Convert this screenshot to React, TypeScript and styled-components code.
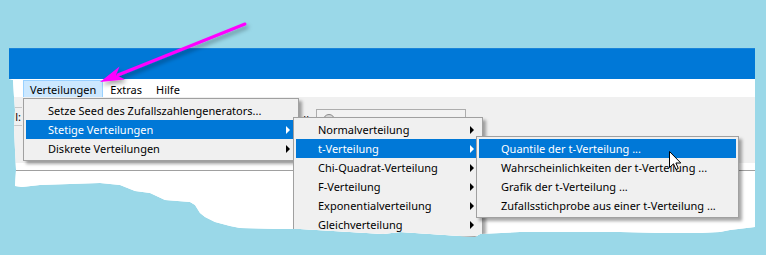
import React from "react";
import styled, { createGlobalStyle } from "styled-components";

const Global = createGlobalStyle`
  html, body { margin: 0; padding: 0; background: #9ad8e8; }
  body {
    width: 766px; height: 255px; overflow: hidden;
    font-family: "Noto Sans", "DejaVu Sans", sans-serif;
    font-size: 11px; color: #000;
  }
`;

const Stage = styled.div`
  position: relative;
  width: 766px;
  height: 255px;
  box-sizing: border-box;
  padding: 48px 0 0 9px;
`;

const tornEdge = `polygon(
  0px 0px, 746px 0px, 746px 179px,
  721px 182px, 711px 184px, 691px 185px, 651px 185px, 611px 184px,
  511px 184px, 471px 186px, 466px 189px, 421px 186px, 391px 184px,
  374px 186px, 291px 181px, 268px 181px, 231px 180px, 221px 178px,
  206px 174px, 196px 169px, 191px 165px, 186px 157px, 181px 154px,
  156px 152px, 141px 145px, 126px 143px, 111px 137px, 91px 135px,
  31px 137px, 13px 139px, 6px 138px,
  7px 122px, 6px 102px, 5px 82px, 6px 62px, 5px 49px, 4px 32px,
  0px 31px
)`;

const Window = styled.div`
  position: relative;
  width: 746px;
  height: 190px;
  display: flex;
  flex-direction: column;
  background: #fff;
  clip-path: ${tornEdge};
`;

const TitleBar = styled.div`
  height: 30px;
  flex: none;
  background: #0078d7;
  border-top: 1px solid #1a84d9;
`;

const MenuBar = styled.div`
  height: 18px;
  flex: none;
  background: #fff;
  display: flex;
  align-items: flex-end;
  padding-left: 14px;
`;

const MenuTitle = styled.div<{ $open?: boolean }>`
  height: 17px;
  box-sizing: border-box;
  padding: 0 6px;
  display: flex;
  align-items: center;
  border: 1px solid ${(p) => (p.$open ? "#99d1ff" : "transparent")};
  border-bottom: none;
  background: ${(p) => (p.$open ? "#cce8ff" : "transparent")};
  white-space: nowrap;
`;

const Toolbar = styled.div`
  height: 66px;
  flex: none;
  background: #f0f0f0;
  display: flex;
  align-items: flex-start;
`;

const DataLabel = styled.div`
  width: 13px;
  height: 19px;
  margin-top: 10px;
  box-sizing: border-box;
  border-top: 1px solid #c8c8c8;
  border-bottom: 1px solid #c8c8c8;
  display: flex;
  align-items: center;
  justify-content: flex-end;
  padding-right: 1px;
  white-space: nowrap;
`;

const ModelGroup = styled.div`
  margin-left: 250px;
  margin-top: 12px;
  display: flex;
  align-items: center;
  gap: 4px;
`;

const ModelLabel = styled.div`
  width: 40px;
  text-align: right;
  white-space: nowrap;
`;

const ModelBox = styled.div`
  width: 150px;
  height: 21px;
  box-sizing: border-box;
  border: 1px solid #adadad;
  background: #f2f2f2;
  display: flex;
  align-items: center;
  gap: 10px;
  padding: 3px 0 0 6px;
  color: #e00000;
  white-space: nowrap;
`;

const ModelIcon = styled.span`
  width: 10px;
  height: 10px;
  margin-top: -3px;
  border-radius: 50%;
  border: 1px solid #8a8a8a;
  background: #d8d8d8;
  flex: none;
`;

const ToolbarFoot = styled.div`
  height: 7px;
  flex: none;
  background: #fff;
  border-bottom: 1px solid #a0a0a0;
`;

const Content = styled.div`
  flex: 1;
  background: #fff;
`;

const MenuPanel = styled.div<{ $left: number; $top: number; $width: number }>`
  position: absolute;
  left: ${(p) => p.$left}px;
  top: ${(p) => p.$top}px;
  width: ${(p) => p.$width}px;
  box-sizing: border-box;
  background: #f0f0f0;
  border: 1px solid #a0a0a0;
  padding: 2px;
  box-shadow: 3px 3px 3px rgba(0, 0, 0, 0.35);
  display: flex;
  flex-direction: column;
`;

const MenuRow = styled.div<{ $hot?: boolean }>`
  height: 19px;
  flex: none;
  display: flex;
  align-items: center;
  padding: 0 6px 0 22px;
  white-space: nowrap;
  background: ${(p) => (p.$hot ? "#0078d7" : "transparent")};
  color: ${(p) => (p.$hot ? "#fff" : "#000")};
`;

const SubArrow = styled.span`
  margin-left: auto;
  width: 0;
  height: 0;
  border-left: 4px solid currentColor;
  border-top: 4px solid transparent;
  border-bottom: 4px solid transparent;
`;

const Overlay = styled.svg<{ $left: number; $top: number }>`
  position: absolute;
  left: ${(p) => p.$left}px;
  top: ${(p) => p.$top}px;
  overflow: visible;
  pointer-events: none;
`;

type Item = { label: string; sub?: boolean; hot?: boolean };

const menu1: Item[] = [
  { label: "Setze Seed des Zufallszahlengenerators..." },
  { label: "Stetige Verteilungen", sub: true, hot: true },
  { label: "Diskrete Verteilungen", sub: true },
];

const menu2: Item[] = [
  { label: "Normalverteilung", sub: true },
  { label: "t-Verteilung", sub: true, hot: true },
  { label: "Chi-Quadrat-Verteilung", sub: true },
  { label: "F-Verteilung", sub: true },
  { label: "Exponentialverteilung", sub: true },
  { label: "Gleichverteilung", sub: true },
];

const menu3: Item[] = [
  { label: "Quantile der t-Verteilung ...", hot: true },
  { label: "Wahrscheinlichkeiten der t-Verteilung ..." },
  { label: "Grafik der t-Verteilung ..." },
  { label: "Zufallsstichprobe aus einer t-Verteilung ..." },
];

function Menu({ items, left, top, width }: { items: Item[]; left: number; top: number; width: number }) {
  return (
    <MenuPanel $left={left} $top={top} $width={width}>
      {items.map((it) => (
        <MenuRow key={it.label} $hot={it.hot}>
          {it.label}
          {it.sub && <SubArrow />}
        </MenuRow>
      ))}
    </MenuPanel>
  );
}

export default function App() {
  return (
    <>
      <Global />
      <Stage>
        <Window>
          <TitleBar />
          <MenuBar>
            <MenuTitle $open>Verteilungen</MenuTitle>
            <MenuTitle>Extras</MenuTitle>
            <MenuTitle>Hilfe</MenuTitle>
          </MenuBar>
          <Toolbar>
            <DataLabel>l:</DataLabel>
            <ModelGroup>
              <ModelLabel>Modell:</ModelLabel>
              <ModelBox>
                <ModelIcon />
                Kein aktuelles Modell
              </ModelBox>
            </ModelGroup>
          </Toolbar>
          <ToolbarFoot />
          <Content />
          <Menu items={menu1} left={14} top={50} width={276} />
          <Menu items={menu2} left={284} top={69} width={190} />
          <Menu items={menu3} left={467} top={88} width={263} />
        </Window>

        <Overlay $left={0} $top={0} width={766} height={255} viewBox="0 0 766 255">
          <defs>
            <filter id="arrowShadow" x="-20%" y="-50%" width="140%" height="200%">
              <feDropShadow dx="2" dy="3" stdDeviation="2" floodColor="#000" floodOpacity="0.35" />
            </filter>
          </defs>
          <g filter="url(#arrowShadow)">
            <line x1="245" y1="24" x2="118" y2="75" stroke="#ff00ff" strokeWidth="3" strokeLinecap="round" />
            <polygon points="100,82 119.5,66.5 116,75 125,79.5" fill="#ff00ff" />
          </g>
        </Overlay>

        <Overlay $left={669} $top={151} width={13} height={20} viewBox="0 0 13 20">
          <path
            d="M0.5 0.5 L0.5 16.5 L4.5 12.8 L7 18.5 L9.3 17.5 L6.9 12 L11.8 12 Z"
            fill="#fff"
            stroke="#000"
            strokeWidth="1"
            strokeLinejoin="miter"
          />
        </Overlay>
      </Stage>
    </>
  );
}
